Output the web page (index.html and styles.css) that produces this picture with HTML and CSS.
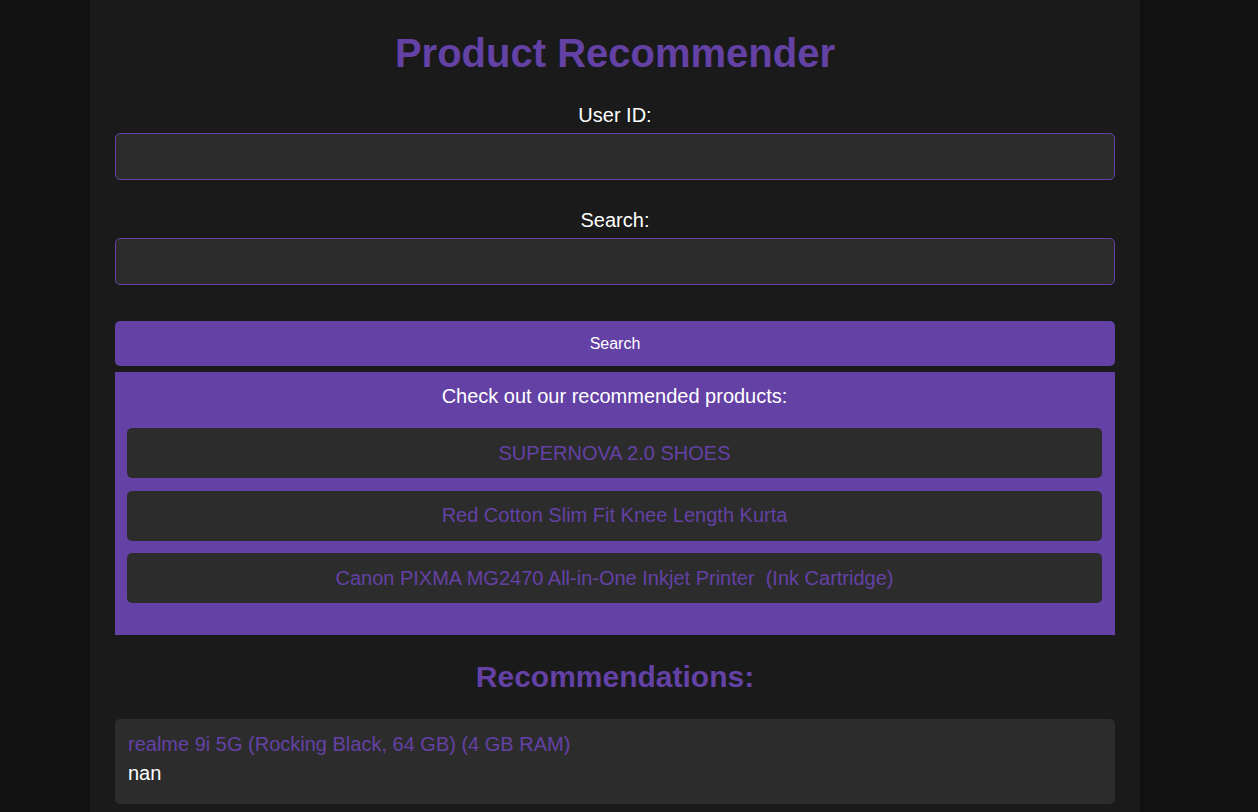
FILE: index.html
```html
<!DOCTYPE html>
<html>
<head>
<meta charset="utf-8">
<link rel="stylesheet" href="styles.css">
</head>
<body>
<div class="container">
  <h1 class="title">Product Recommender</h1>
  <form class="form">
    <label class="label">User ID:</label>
    <input class="field" type="text">
    <label class="label label-second">Search:</label>
    <input class="field" type="text">
    <button class="btn" type="button">Search</button>
  </form>
  <div class="promo">
    <p class="promo-head">Check out our recommended products:</p>
    <div class="promo-item">SUPERNOVA 2.0 SHOES</div>
    <div class="promo-item">Red Cotton Slim Fit Knee Length Kurta</div>
    <div class="promo-item">Canon PIXMA MG2470 All-in-One Inkjet Printer &nbsp;(Ink Cartridge)</div>
  </div>
  <h2 class="subtitle">Recommendations:</h2>
  <div class="card">
    <div class="card-title">realme 9i 5G (Rocking Black, 64 GB) (4 GB RAM)</div>
    <div class="card-text">nan</div>
  </div>
</div>
</body>
</html>
```
FILE: styles.css
```css
html, body {
  margin: 0;
  padding: 0;
  background: #111111;
  font-family: "Liberation Sans", Arial, sans-serif;
  color: #ffffff;
}
.container {
  width: 1000px;
  margin-left: 90px;
  padding: 30px 25px 40px;
  background: #1a1a1a;
  min-height: 812px;
  box-sizing: content-box;
}
.title {
  margin: 0;
  font-size: 40px;
  line-height: 46px;
  font-weight: bold;
  color: #6441a5;
  text-align: center;
}
.form {
  display: flex;
  flex-direction: column;
  margin-top: 28px;
}
.label {
  display: block;
  text-align: center;
  font-size: 20px;
  line-height: 23px;
  margin-bottom: 6px;
}
.label-second {
  margin-top: 29px;
}
.field {
  display: block;
  width: 100%;
  height: 47px;
  box-sizing: border-box;
  background: #2c2c2c;
  border: 1px solid #6441a5;
  border-radius: 5px;
  color: #ffffff;
  font-size: 16px;
  padding: 0 10px;
  outline: none;
}
.btn {
  display: block;
  width: 100%;
  height: 45px;
  margin-top: 36px;
  border: none;
  border-radius: 5px;
  background: #6441a5;
  color: #ffffff;
  font-family: "Liberation Sans", Arial, sans-serif;
  font-size: 16px;
  line-height: 18px;
  cursor: pointer;
}
.promo {
  margin-top: 6px;
  background: #6441a5;
  padding: 13px 13px 32px 12px;
  display: flex;
  flex-direction: column;
  gap: 12.5px;
}
.promo-head {
  margin: 0 0 7.5px;
  text-align: center;
  font-size: 20px;
  line-height: 23px;
  color: #ffffff;
}
.promo-item {
  height: 50px;
  display: flex;
  align-items: center;
  justify-content: center;
  background: #2c2c2c;
  border-radius: 5px;
  color: #6441a5;
  font-size: 20px;
  line-height: 23px;
}
.subtitle {
  margin: 25px 0 25px;
  text-align: center;
  font-size: 30px;
  line-height: 34px;
  font-weight: bold;
  color: #6441a5;
}
.card {
  background: #2c2c2c;
  border-radius: 5px;
  padding: 14px 13px 19px;
}
.card-title {
  font-size: 20px;
  line-height: 23px;
  color: #6441a5;
  margin-bottom: 6px;
}
.card-text {
  font-size: 20px;
  line-height: 23px;
  color: #ffffff;
}
```
